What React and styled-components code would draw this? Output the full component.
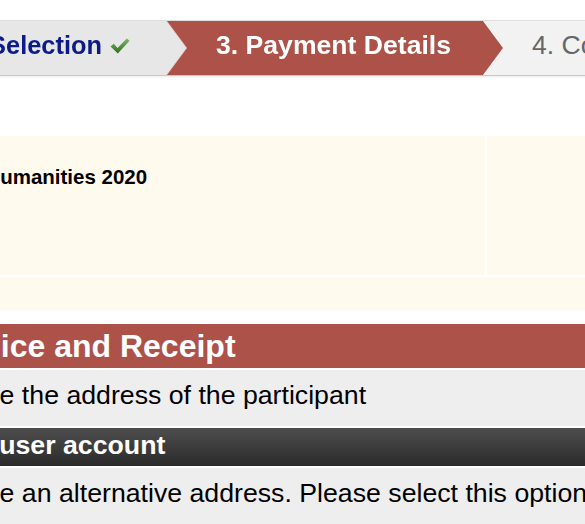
import React from "react";
import styled, { createGlobalStyle } from "styled-components";

const Global = createGlobalStyle`
  html, body { margin: 0; padding: 0; background: #ffffff; }
  body {
    font-family: "Liberation Sans", Arial, Helvetica, sans-serif;
    overflow: hidden;
  }
`;

const Page = styled.div`
  width: 585px;
  height: 524px;
  overflow: hidden;
  position: relative;
`;

const Stepper = styled.div`
  display: flex;
  margin: 20px 0 0 -200px;
  width: 1000px;
  border-top: 1px solid #dedede;
  border-bottom: 1px solid #c8c8c8;
  box-shadow: 0 1px 2px rgba(0, 0, 0, 0.08);
  background: #f2f2f2;
`;

const StepWrap = styled.div`
  flex: none;
  width: ${(p) => p.$width}px;
  margin-right: ${(p) => (p.$arrow ? -20 : 0)}px;
  z-index: ${(p) => p.$z};
  filter: ${(p) => (p.$arrow ? "drop-shadow(1px 0 0 rgba(255,255,255,0.7))" : "none")};
`;

const StepBody = styled.div`
  height: 54px;
  box-sizing: border-box;
  display: flex;
  justify-content: ${(p) => (p.$end ? "flex-end" : "flex-start")};
  align-items: flex-start;
  padding: 9px ${(p) => p.$pr || 0}px 0 ${(p) => p.$pl || 0}px;
  background: ${(p) => p.$bg};
  clip-path: ${(p) =>
    p.$arrow
      ? "polygon(0 0, calc(100% - 20px) 0, 100% 50%, calc(100% - 20px) 100%, 0 100%)"
      : "none"};
  white-space: nowrap;
  overflow: hidden;
`;

const StepLabel = styled.span`
  font-size: ${(p) => p.$size || 26.6}px;
  line-height: 31px;
  font-weight: ${(p) => (p.$bold ? 700 : 400)};
  color: ${(p) => p.$color};
`;

const Check = styled.svg`
  display: inline-block;
  width: 20px;
  height: 16px;
  margin-left: 8px;
  vertical-align: baseline;
`;

const Content = styled.div`
  margin-left: -100px;
  width: 900px;
`;

const InfoTable = styled.table`
  margin-top: 58px;
  width: 100%;
  table-layout: fixed;
  border-collapse: separate;
  border-spacing: 2px;
  background: #ffffff;
`;

const Cell = styled.td`
  background: #fffaee;
  height: ${(p) => p.$h}px;
  box-sizing: border-box;
  vertical-align: top;
  padding: ${(p) => (p.$text ? "29px 0 0 15px" : "0")};
  font-size: 20.5px;
  line-height: 24px;
  font-weight: 700;
  color: #000;
  white-space: nowrap;
  overflow: hidden;
`;

const SectionTitle = styled.div`
  margin-top: 12px;
  background: #ad5249;
  color: #fff;
  font-size: 32px;
  line-height: 36px;
  font-weight: 700;
  padding: 4px 0 4px 35px;
  white-space: nowrap;
`;

const OptionRow = styled.div`
  margin-top: 2px;
  background: ${(p) => (p.$selected ? "linear-gradient(#4e4e4e, #2a2a2a)" : "#eeeeee")};
  color: ${(p) => (p.$selected ? "#ffffff" : "#000000")};
  font-size: 26.7px;
  line-height: 31px;
  font-weight: ${(p) => (p.$selected ? 700 : 400)};
  padding: ${(p) => (p.$selected ? "2px 0 5px 33px" : "10px 0 15px 67px")};
  white-space: nowrap;
  overflow: hidden;
`;

export default function App() {
  return (
    <Page>
      <Global />
      <Stepper>
        <StepWrap $width={386} $arrow $z={3}>
          <StepBody $arrow $end $pr={56} $bg="#e7e7e7">
            <StepLabel $bold $size={25.4} $color="#0c1a8a">
              2. Course Selection
              <Check viewBox="0 0 20 16">
                <defs>
                  <linearGradient id="chk" x1="0" y1="0" x2="0" y2="1">
                    <stop offset="0" stopColor="#7cb860" />
                    <stop offset="1" stopColor="#2f6d22" />
                  </linearGradient>
                </defs>
                <path
                  d="M0.5 8.5 L3.8 5.8 L7.5 10 L16.8 0.5 L19.6 2.8 L7.8 15.6 Z"
                  fill="url(#chk)"
                />
              </Check>
            </StepLabel>
          </StepBody>
        </StepWrap>
        <StepWrap $width={337} $arrow $z={2}>
          <StepBody $arrow $pl={50} $bg="#ad5249">
            <StepLabel $bold $color="#ffffff">3. Payment Details</StepLabel>
          </StepBody>
        </StepWrap>
        <StepWrap $width={400} $z={1}>
          <StepBody $pl={49} $bg="#f2f2f2">
            <StepLabel $color="#666666">4. Confirmation</StepLabel>
          </StepBody>
        </StepWrap>
      </Stepper>

      <Content>
        <InfoTable>
          <colgroup>
            <col style={{ width: "583px" }} />
            <col />
          </colgroup>
          <tbody>
            <tr>
              <Cell $h={139} $text>Digital Humanities 2020</Cell>
              <Cell $h={139} />
            </tr>
            <tr>
              <Cell $h={33} colSpan={2} />
            </tr>
          </tbody>
        </InfoTable>

        <SectionTitle>Invoice and Receipt</SectionTitle>
        <OptionRow>Use the address of the participant</OptionRow>
        <OptionRow $selected>Your user account</OptionRow>
        <OptionRow>
          Use an alternative address. Please select this option if the invoice should be sent elsewhere.
        </OptionRow>
      </Content>
    </Page>
  );
}
